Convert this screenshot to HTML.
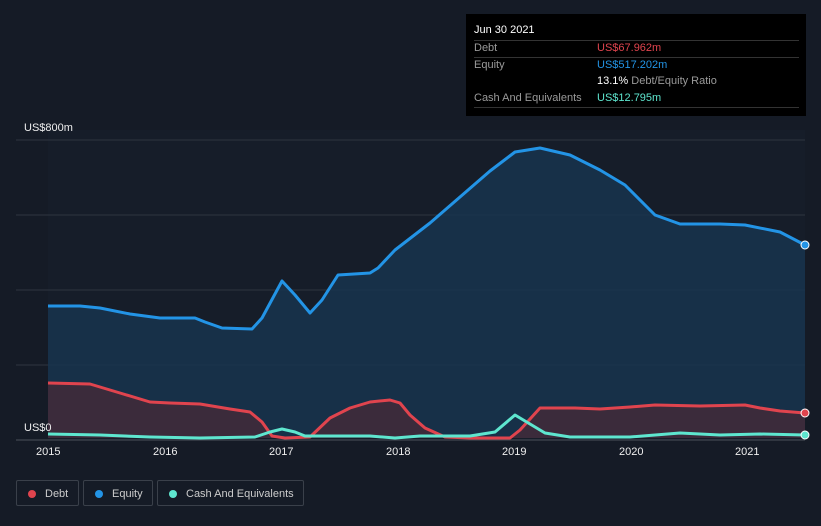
<!DOCTYPE html>
<html><head><style>
body{margin:0;width:821px;height:526px;background:#151b26;font-family:"Liberation Sans",sans-serif;overflow:hidden;position:relative}
.tt{position:absolute;left:466px;top:14px;width:340px;height:102px;background:#000}
.tt div{position:absolute;font-size:11px;color:#9a9a9a}
.ln{position:absolute;left:8px;width:325px;height:1px;background:#333}
.lg{position:absolute;top:480px;height:26px;border:1px solid #3a404a;border-radius:2px;color:#ccc;font-size:11px;line-height:26px;box-sizing:border-box}
.lg i{position:absolute;left:11px;top:9px;width:8px;height:8px;border-radius:50%}
.ax{position:absolute;top:446px;color:#eee;font-size:11px}
</style></head><body>
<svg width="821" height="526" style="position:absolute;left:0;top:0">
<rect x="48" y="130" width="757" height="310" fill="#161d29"/>
<g stroke="#2e3540" stroke-width="1"><line x1="16" y1="140" x2="805" y2="140"/><line x1="16" y1="215" x2="805" y2="215"/><line x1="16" y1="290" x2="805" y2="290"/><line x1="16" y1="365" x2="805" y2="365"/><line x1="16" y1="440" x2="805" y2="440" stroke="#4a505a"/></g>
<polygon fill="#17344d" opacity="0.85" points="48,438 48,306 80,306 100,308 130,314 160,318 195,318 205,322 222,328 252,329 262,318 282,281 295,295 310,313 322,300 338,275 370,273 378,268 395,250 430,223 460,197 490,171 515,152 540,148 570,155 600,170 625,185 655,215 680,224 720,224 745,225 780,232 805,245 805,438"/>
<polygon fill="#3b2b3b" points="48,438 48,383 90,384 120,393 150,402 170,403 200,404 230,409 250,412 262,422 272,436 285,438 310,437 330,418 350,408 370,402 390,400 400,403 410,415 425,428 445,437 470,438 510,438 520,430 540,408 575,408 600,409 630,407 655,405 700,406 745,405 760,408 780,411 805,413 805,438"/>
<polyline fill="none" stroke="#2394e6" stroke-width="3" stroke-linejoin="round" points="48,306 80,306 100,308 130,314 160,318 195,318 205,322 222,328 252,329 262,318 282,281 295,295 310,313 322,300 338,275 370,273 378,268 395,250 430,223 460,197 490,171 515,152 540,148 570,155 600,170 625,185 655,215 680,224 720,224 745,225 780,232 805,245"/>
<polyline fill="none" stroke="#e0444e" stroke-width="3" stroke-linejoin="round" points="48,383 90,384 120,393 150,402 170,403 200,404 230,409 250,412 262,422 272,436 285,438 310,437 330,418 350,408 370,402 390,400 400,403 410,415 425,428 445,437 470,438 510,438 520,430 540,408 575,408 600,409 630,407 655,405 700,406 745,405 760,408 780,411 805,413"/>
<polyline fill="none" stroke="#5ee6cf" stroke-width="3" stroke-linejoin="round" points="48,434 100,435 150,437 200,438 255,437 270,432 282,429 295,432 305,436 340,436 370,436 395,438 420,436 470,436 495,432 515,415 530,424 545,433 570,437 600,437 630,437 680,433 720,435 760,434 805,435"/>
<circle cx="805" cy="245" r="4" fill="#2394e6" stroke="#fff" stroke-width="1"/>
<circle cx="805" cy="413" r="4" fill="#e0444e" stroke="#fff" stroke-width="1"/>
<circle cx="805" cy="435" r="4" fill="#5ee6cf" stroke="#fff" stroke-width="1"/>
</svg>
<div style="position:absolute;left:24px;top:122px;color:#eee;font-size:11px">US$800m</div>
<div style="position:absolute;left:24px;top:422px;color:#eee;font-size:11px">US$0</div>
<div class="ax" style="left:36px">2015</div><div class="ax" style="left:153px">2016</div><div class="ax" style="left:269px">2017</div><div class="ax" style="left:386px">2018</div><div class="ax" style="left:502px">2019</div><div class="ax" style="left:619px">2020</div><div class="ax" style="left:735px">2021</div>
<div class="tt">
<div style="left:8px;top:10px;color:#fff">Jun 30 2021</div>
<div class="ln" style="top:26px"></div>
<div style="left:8px;top:28px">Debt</div><div style="left:131px;top:28px;color:#e0444e">US$67.962m</div>
<div class="ln" style="top:43px"></div>
<div style="left:8px;top:45px">Equity</div><div style="left:131px;top:45px;color:#2394e6">US$517.202m</div>
<div style="left:131px;top:61px"><b style="color:#fff;font-weight:normal">13.1%</b> Debt/Equity Ratio</div>
<div style="left:8px;top:78px">Cash And Equivalents</div><div style="left:131px;top:78px;color:#5ee6cf">US$12.795m</div>
<div class="ln" style="top:93px"></div>
</div>
<div class="lg" style="left:16px;width:63px"><i style="background:#e0444e"></i><span style="margin-left:28px">Debt</span></div>
<div class="lg" style="left:83px;width:70px"><i style="background:#2394e6"></i><span style="margin-left:28px">Equity</span></div>
<div class="lg" style="left:157px;width:147px"><i style="background:#5ee6cf"></i><span style="margin-left:28px">Cash And Equivalents</span></div>
</body></html>
